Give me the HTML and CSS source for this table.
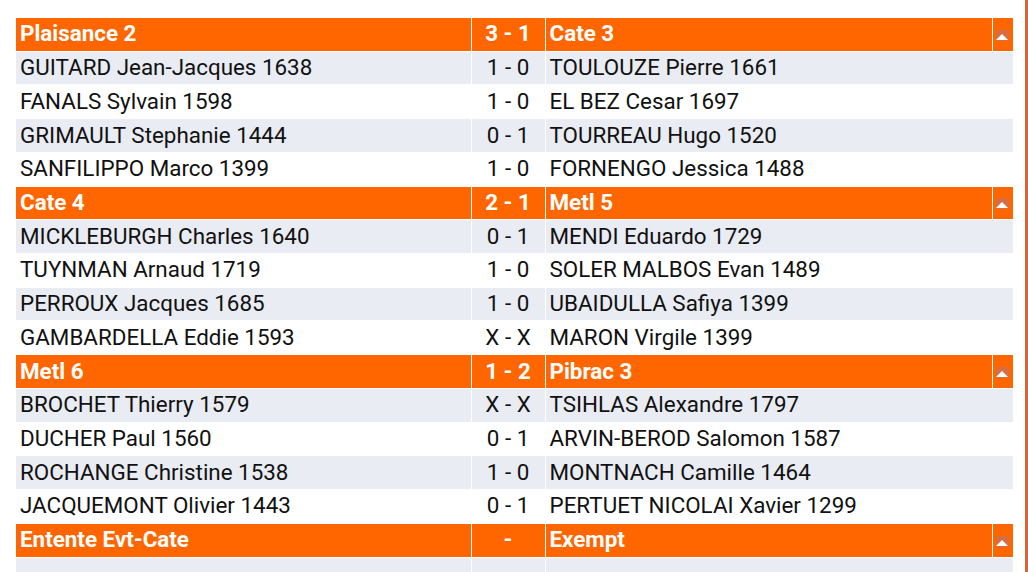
FILE: index.html
```html
<!DOCTYPE html>
<html>
<head>
<meta charset="utf-8">
<link rel="stylesheet" href="styles.css">
</head>
<body>
<div class="page">
  <div class="content">
    <table class="matches">
      <colgroup>
        <col class="c-home"><col class="c-score"><col class="c-away"><col class="c-tog">
      </colgroup>
      <tbody>
        <tr class="team"><td>Plaisance 2</td><td class="score">3 - 1</td><td>Cate 3</td><td class="tog"><span class="arrow"></span></td></tr>
        <tr class="odd"><td>GUITARD Jean-Jacques 1638</td><td class="score">1 - 0</td><td>TOULOUZE Pierre 1661</td><td class="blank"></td></tr>
        <tr class="even"><td>FANALS Sylvain 1598</td><td class="score">1 - 0</td><td>EL BEZ Cesar 1697</td><td class="blank"></td></tr>
        <tr class="odd"><td>GRIMAULT Stephanie 1444</td><td class="score">0 - 1</td><td>TOURREAU Hugo 1520</td><td class="blank"></td></tr>
        <tr class="even"><td>SANFILIPPO Marco 1399</td><td class="score">1 - 0</td><td>FORNENGO Jessica 1488</td><td class="blank"></td></tr>

        <tr class="team"><td>Cate 4</td><td class="score">2 - 1</td><td>Metl 5</td><td class="tog"><span class="arrow"></span></td></tr>
        <tr class="odd"><td>MICKLEBURGH Charles 1640</td><td class="score">0 - 1</td><td>MENDI Eduardo 1729</td><td class="blank"></td></tr>
        <tr class="even"><td>TUYNMAN Arnaud 1719</td><td class="score">1 - 0</td><td>SOLER MALBOS Evan 1489</td><td class="blank"></td></tr>
        <tr class="odd"><td>PERROUX Jacques 1685</td><td class="score">1 - 0</td><td>UBAIDULLA Safiya 1399</td><td class="blank"></td></tr>
        <tr class="even"><td>GAMBARDELLA Eddie 1593</td><td class="score">X - X</td><td>MARON Virgile 1399</td><td class="blank"></td></tr>

        <tr class="team"><td>Metl 6</td><td class="score">1 - 2</td><td>Pibrac 3</td><td class="tog"><span class="arrow"></span></td></tr>
        <tr class="odd"><td>BROCHET Thierry 1579</td><td class="score">X - X</td><td>TSIHLAS Alexandre 1797</td><td class="blank"></td></tr>
        <tr class="even"><td>DUCHER Paul 1560</td><td class="score">0 - 1</td><td>ARVIN-BEROD Salomon 1587</td><td class="blank"></td></tr>
        <tr class="odd"><td>ROCHANGE Christine 1538</td><td class="score">1 - 0</td><td>MONTNACH Camille 1464</td><td class="blank"></td></tr>
        <tr class="even"><td>JACQUEMONT Olivier 1443</td><td class="score">0 - 1</td><td>PERTUET NICOLAI Xavier 1299</td><td class="blank"></td></tr>

        <tr class="team"><td>Entente Evt-Cate</td><td class="score">-</td><td>Exempt</td><td class="tog"><span class="arrow"></span></td></tr>
        <tr class="odd"><td></td><td class="score"></td><td></td><td class="blank"></td></tr>
      </tbody>
    </table>
  </div>
  <div class="rail"></div>
</div>
</body>
</html>
```

FILE: styles.css
```css
html, body {
  margin: 0;
  padding: 0;
  background: #ffffff;
}

body {
  font-family: Roboto, "Liberation Sans", sans-serif;
  color: #111111;
  overflow: hidden;
}

.page {
  display: flex;
  width: 1028px;
  height: 572px;
}

.content {
  flex: 1;
  padding: 17px 0 0 16px;
}

.rail {
  width: 3px;
  margin-left: 10px;
  background: #d4653b;
}

.matches {
  width: 997px;
  border-collapse: collapse;
  table-layout: fixed;
  font-size: 22.4px;
}

.c-home { width: 455px; }
.c-score { width: 74px; }
.c-away { width: 447px; }
.c-tog { width: 21px; }

.matches td {
  height: 33.73px;
  padding: 0 4px 2px;
  box-sizing: border-box;
  white-space: nowrap;
  overflow: hidden;
  border-left: 1px solid rgba(255, 255, 255, 0.3);
  border-top: 1px solid rgba(255, 255, 255, 0.3);
  vertical-align: middle;
  line-height: 26px;
}

.matches td:first-child {
  border-left: none;
}

.matches td.blank {
  border-left: none;
}

.matches tr.team td {
  background: #ff6600;
  color: #ffffff;
  font-weight: 700;
  border-left-color: rgba(255, 255, 255, 0.07);
  border-top-color: rgba(255, 255, 255, 0.07);
}

.matches tr.odd td {
  background: #e9ecf3;
}

.matches tr.even td {
  background: #ffffff;
}

.matches td.score {
  text-align: center;
  padding: 0 0 2px;
}

.matches td.tog {
  padding: 0;
  text-align: center;
  line-height: 0;
}

.arrow {
  display: inline-block;
  width: 13px;
  height: 11px;
  background: #d86d42;
  position: relative;
  vertical-align: middle;
  margin-top: 2px;
}

.arrow::after {
  content: "";
  position: absolute;
  left: 0;
  bottom: 1px;
  border-left: 6.5px solid transparent;
  border-right: 6.5px solid transparent;
  border-bottom: 6px solid #ffffff;
}
```
